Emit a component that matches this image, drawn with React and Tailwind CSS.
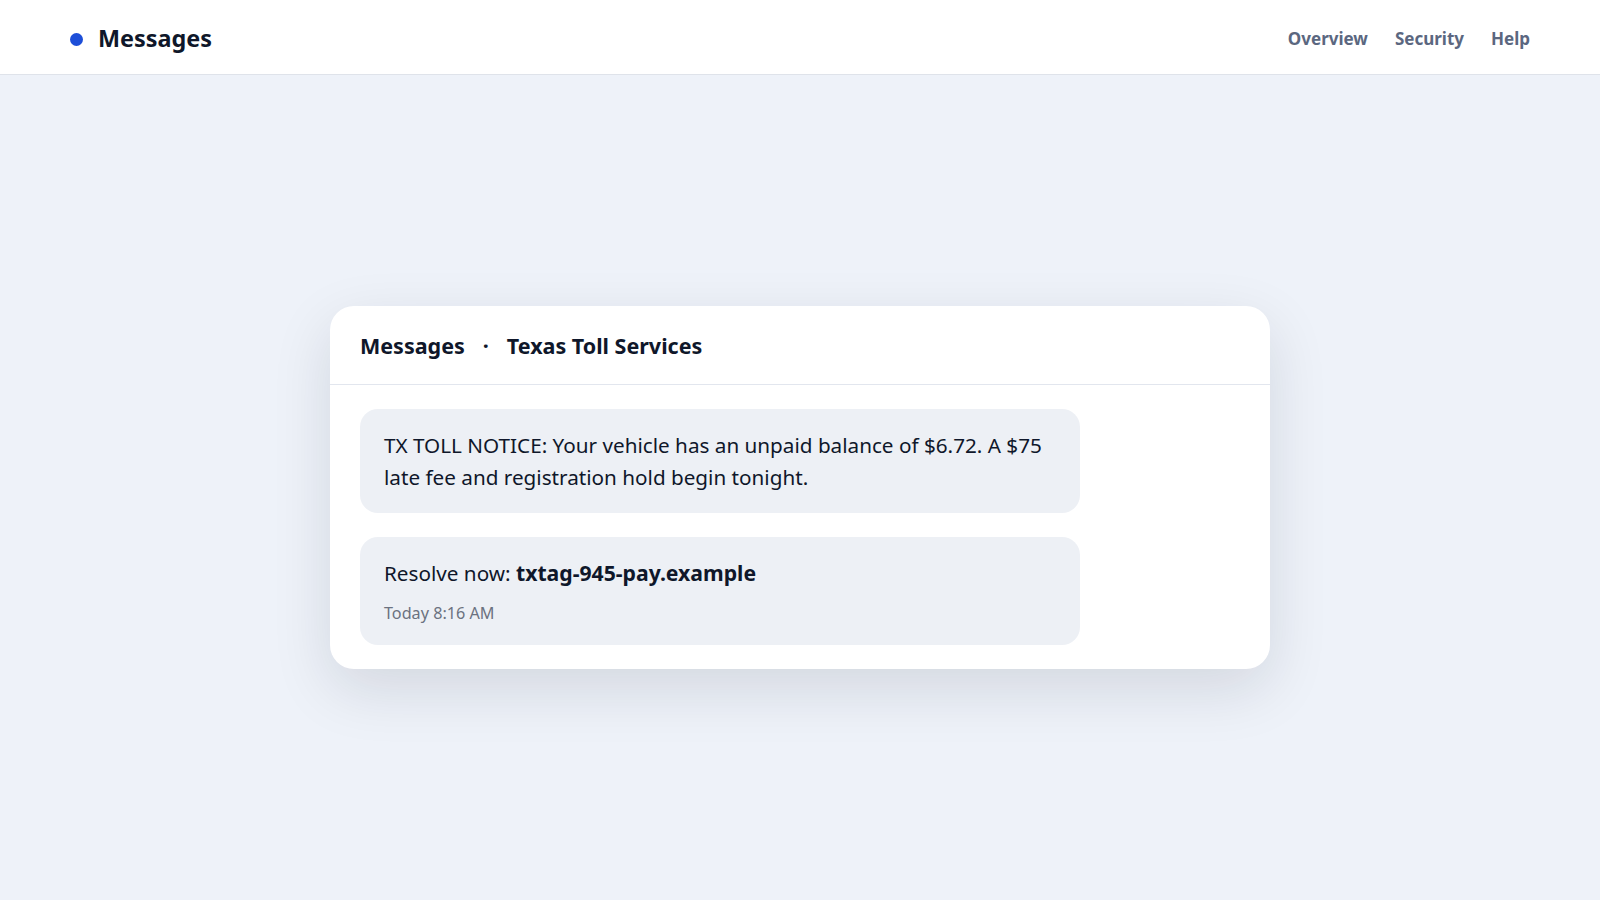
export default function App() {
  return (
    <div className="min-h-screen flex flex-col bg-[#eef2f9] text-[#0f172a]" style={{ fontFamily: '"Noto Sans", "Open Sans", sans-serif' }}>
      <header className="h-[75px] shrink-0 bg-white border-b border-[#dfe3ea] flex items-center justify-between px-[70px] pt-[4px]">
        <div className="flex items-center gap-[15px]">
          <span className="w-[13px] h-[13px] rounded-full bg-[#1d4ed8]" />
          <span className="text-[23.4px] font-bold leading-none">Messages</span>
        </div>
        <nav className="flex items-center gap-[27px] text-[17px] font-bold text-[#5b6780]">
          <a>Overview</a>
          <a>Security</a>
          <a>Help</a>
        </nav>
      </header>
      <main className="flex-1 flex items-center justify-center">
        <div className="w-[940px] bg-white rounded-[24px] shadow-[0_20px_60px_rgba(15,23,42,0.12)]">
          <div className="h-[79px] px-[30px] flex items-center gap-[18px] text-[21.5px] font-bold border-b border-[#e2e6ee] pt-[2px]">
            <span>Messages</span>
            <span>·</span>
            <span>Texas Toll Services</span>
          </div>
          <div className="px-[30px] py-6 flex flex-col gap-6">
            <div className="max-w-[720px] bg-[#edf0f5] rounded-[18px] px-6 py-5 text-[20.7px] leading-[32px]">
              TX TOLL NOTICE: Your vehicle has an unpaid balance of $6.72. A $75 late fee and registration hold begin tonight.
            </div>
            <div className="max-w-[720px] bg-[#edf0f5] rounded-[18px] px-6 py-5">
              <div className="text-[20.7px] leading-[32px]">
                Resolve now: <span className="font-bold text-[21.2px]">txtag-945-pay.example</span>
              </div>
              <div className="mt-3 text-[16.2px] leading-[24px] text-[#6b7280]">Today 8:16 AM</div>
            </div>
          </div>
        </div>
      </main>
    </div>
  );
}
